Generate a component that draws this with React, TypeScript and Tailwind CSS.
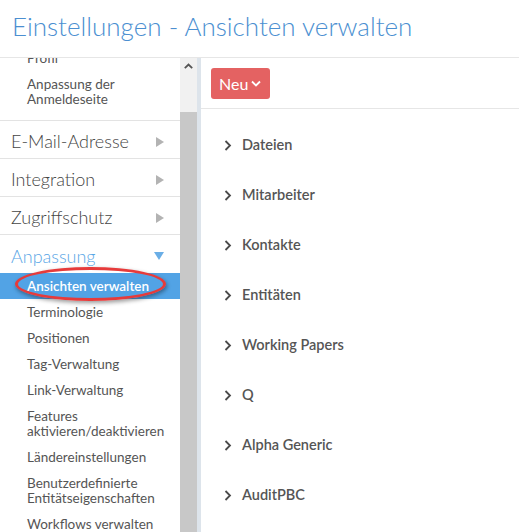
import React from "react";

const subTop = [
  { label: "Profil" },
  { label: "Anpassung der\nAnmeldeseite" },
];

const subItems = [
  "Terminologie",
  "Positionen",
  "Tag-Verwaltung",
  "Link-Verwaltung",
  "Features\naktivieren/deaktivieren",
  "Ländereinstellungen",
  "Benutzerdefinierte\nEntitätseigenschaften",
  "Workflows verwalten",
];

const mainItems = [
  "Dateien",
  "Mitarbeiter",
  "Kontakte",
  "Entitäten",
  "Working Papers",
  "Q",
  "Alpha Generic",
  "AuditPBC",
];

function SubRow({ text, active }: { text: string; active?: boolean }) {
  return (
    <div
      className={
        "pl-[27px] py-[5.5px] text-[13.5px] leading-[15px] whitespace-pre-line " +
        (active ? "bg-[#52a3e5] text-white font-semibold" : "text-[#555]")
      }
    >
      {text}
    </div>
  );
}

function TopRow({ text, open }: { text: string; open?: boolean }) {
  return (
    <div
      className={
        "h-[38px] flex items-center justify-between pl-[11px] pr-[16px] pt-[4px] text-[18px] font-light border-b border-[#e3e3e3] " +
        (open ? "text-[#59a6e6] border-b-0 h-[37px]" : "text-[#444]")
      }
    >
      <span>{text}</span>
      {open ? (
        <svg width="10" height="8" viewBox="0 0 10 8">
          <path d="M0 0 H10 L5 8 Z" fill="#6aaee6" />
        </svg>
      ) : (
        <svg width="8" height="10" viewBox="0 0 8 10">
          <path d="M0 0 V10 L8 5 Z" fill="#b3b3b3" />
        </svg>
      )}
    </div>
  );
}

export default function App() {
  return (
    <div
      className="w-[519px] h-[532px] overflow-hidden bg-white"
      style={{ fontFamily: "Lato, 'Open Sans', sans-serif" }}
    >
      <div className="h-[58px] border-b border-[#e6e6e6] pl-[12px] pt-[10px]">
        <h1 className="text-[26px] leading-[32px] text-[#4b8fd1] font-light">
          Einstellungen - Ansichten verwalten
        </h1>
      </div>
      <div className="flex h-[474px]">
        <div className="w-[180px] relative overflow-hidden">
          <div className="mt-[-13px] pb-[8px] border-b border-[#e3e3e3]">
            {subTop.map((s) => (
              <SubRow key={s.label} text={s.label} />
            ))}
          </div>
          <TopRow text="E-Mail-Adresse" />
          <TopRow text="Integration" />
          <TopRow text="Zugriffschutz" />
          <TopRow text="Anpassung" open />
          <SubRow text="Ansichten verwalten" active />
          {subItems.map((s) => (
            <SubRow key={s} text={s} />
          ))}
          <div className="absolute left-[15px] top-[209px] w-[151px] h-[34px] rounded-[50%] border-[3px] border-[#e63b3b] shadow-[1px_2px_4px_rgba(0,0,0,0.4)]" />
        </div>
        <div className="w-[17px] flex flex-col">
          <div className="h-[54px] bg-[#f1f1f1] flex justify-center pt-[5px]">
            <svg width="9" height="6" viewBox="0 0 9 6">
              <path d="M0.8 5.2 L4.5 1.5 L8.2 5.2" stroke="#555" strokeWidth="1.8" fill="none" />
            </svg>
          </div>
          <div className="flex-1 bg-[#c8c8c8]" />
        </div>
        <div className="w-[4px] bg-[#dde4eb]" />
        <div className="flex-1 flex flex-col">
          <div className="h-[51px] border-b border-[#e6e6e6] pl-[10px] pt-[10px]">
            <button className="h-[31px] w-[59px] rounded-[3px] bg-[#e46262] text-white text-[16px] flex items-center pl-[8px] gap-[3px]">
              <span>Neu</span>
              <svg width="10" height="7" viewBox="0 0 10 7">
                <path d="M1 1.5 L5 5.5 L9 1.5" stroke="#fff" strokeWidth="1.8" fill="none" />
              </svg>
            </button>
          </div>
          <div className="pt-[11px]">
            {mainItems.map((m) => (
              <div key={m} className="h-[50px] flex items-center pl-[23px]">
                <svg width="8" height="11" viewBox="0 0 8 11" className="mr-[10px]">
                  <path d="M1.5 1 L6 5.5 L1.5 10" stroke="#4a4a4a" strokeWidth="1.8" fill="none" />
                </svg>
                <span className="text-[14.5px] font-semibold text-[#555]">{m}</span>
              </div>
            ))}
          </div>
        </div>
      </div>
    </div>
  );
}
